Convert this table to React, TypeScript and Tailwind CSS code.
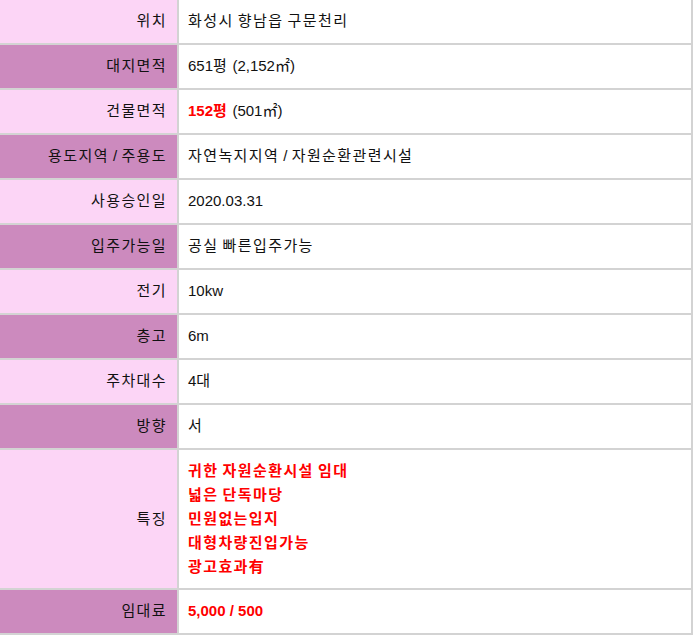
import React from "react";

const red = "text-[#ff0000] font-bold";

function K({ t }: { t: string }) {
  const parts = t.split(/([\uAC00-\uD7A3\u4E00-\u9FFF]+)/);
  return (
    <>
      {parts.map((p, i) =>
        /[\uAC00-\uD7A3\u4E00-\u9FFF]/.test(p) ? (
          <span key={i} className="tracking-[1.4px]">
            {p}
          </span>
        ) : (
          <React.Fragment key={i}>{p}</React.Fragment>
        )
      )}
    </>
  );
}

type Row = { label: string; value: React.ReactNode; dark: boolean; tall?: boolean };

const rows: Row[] = [
  { label: "위치", value: <K t="화성시 향남읍 구문천리" />, dark: false },
  { label: "대지면적", value: <K t="651평 (2,152㎡)" />, dark: true },
  {
    label: "건물면적",
    value: (
      <>
        <span className={red}>
          <K t="152평" />
        </span>
        {" "}
        <K t="(501㎡)" />
      </>
    ),
    dark: false,
  },
  { label: "용도지역 / 주용도", value: <K t="자연녹지지역 / 자원순환관련시설" />, dark: true },
  { label: "사용승인일", value: "2020.03.31", dark: false },
  { label: "입주가능일", value: <K t="공실 빠른입주가능" />, dark: true },
  { label: "전기", value: "10kw", dark: false },
  { label: "층고", value: "6m", dark: true },
  { label: "주차대수", value: <K t="4대" />, dark: false },
  { label: "방향", value: <K t="서" />, dark: true },
  {
    label: "특징",
    value: (
      <div className={`${red} leading-[24px]`}>
        <div><K t="귀한 자원순환시설 임대" /></div>
        <div><K t="넓은 단독마당" /></div>
        <div><K t="민원없는입지" /></div>
        <div><K t="대형차량진입가능" /></div>
        <div><K t="광고효과有" /></div>
      </div>
    ),
    dark: false,
    tall: true,
  },
  { label: "임대료", value: <span className={red}>5,000 / 500</span>, dark: true },
];

export default function App() {
  return (
    <div
      className="w-[693px] bg-white text-[15px] text-[#111]"
      style={{ fontFamily: '"Liberation Sans", "Noto Sans CJK KR", sans-serif' }}
    >
      <div className="w-[693px] border-r-2 border-[#d3d3d3]">
        {rows.map((r, i) => (
          <div key={i} className="flex border-b-2 border-[#d3d3d3]">
            <div
              className={`w-[179px] shrink-0 flex items-center justify-end pr-[10px] border-r-2 border-[#d3d3d3] ${
                r.dark ? "bg-[#cc8abe]" : "bg-[#fcd5f6]"
              }`}
            >
              <span>
                <K t={r.label} />
              </span>
            </div>
            <div
              className={`flex-1 flex items-center pl-[9px] ${
                r.tall ? "py-[9px] min-h-[138px]" : "h-[43px]"
              }`}
            >
              <div>{r.value}</div>
            </div>
          </div>
        ))}
      </div>
    </div>
  );
}
